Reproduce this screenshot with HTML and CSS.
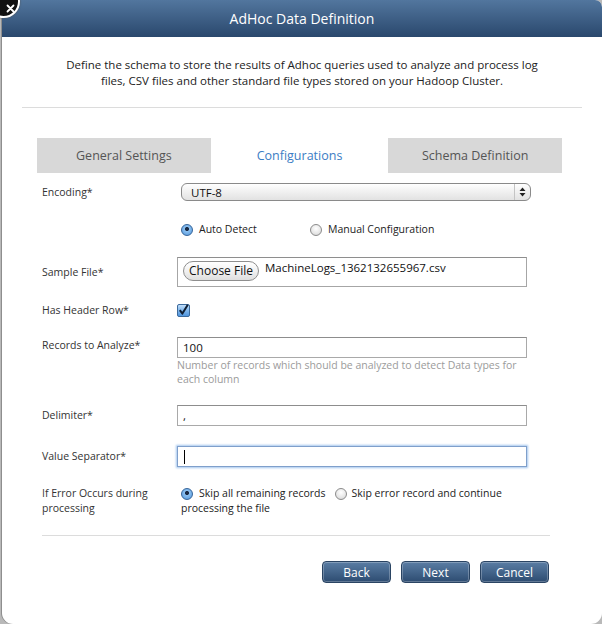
FILE: index.html
```html
<!DOCTYPE html>
<html>
<head>
<meta charset="utf-8">
<title>AdHoc Data Definition</title>
<link rel="stylesheet" href="styles.css">
</head>
<body>
<div class="dialog">
  <div class="close">
    <svg width="12" height="12" viewBox="0 0 12 12"><path d="M2 2 L10 10 M10 2 L2 10" stroke="#fff" stroke-width="2.4" stroke-linecap="round"/></svg>
  </div>
  <div class="header">AdHoc Data Definition</div>
  <p class="intro">Define the schema to store the results of Adhoc queries used to analyze and process log<br>files, CSV files and other standard file types stored on your Hadoop Cluster.</p>
  <hr class="sep">
  <div class="tabs">
    <div class="tab">General Settings</div>
    <div class="tab active">Configurations</div>
    <div class="tab">Schema Definition</div>
  </div>
  <div class="form">
    <div class="row r-enc">
      <div class="label">Encoding*</div>
      <div class="select">
        <span class="select-text">UTF-8</span>
        <span class="select-arrows">
          <svg width="7" height="10" viewBox="0 0 7 10"><path d="M3.5 0.5 L6.5 4 L0.5 4 Z M3.5 9.5 L6.5 6 L0.5 6 Z" fill="#222"/></svg>
        </span>
      </div>
    </div>
    <div class="row r-detect">
      <div class="label"></div>
      <div class="options">
        <span class="opt opt-auto"><span class="radio on"></span><span>Auto Detect</span></span>
        <span class="opt"><span class="radio"></span><span>Manual Configuration</span></span>
      </div>
    </div>
    <div class="row r-file">
      <div class="label">Sample File*</div>
      <div class="filebox">
        <span class="choose">Choose File</span>
        <span class="filename">MachineLogs_1362132655967.csv</span>
      </div>
    </div>
    <div class="row r-header">
      <div class="label">Has Header Row*</div>
      <div class="check">
        <svg width="13" height="13" viewBox="0 0 13 13">
          <defs><linearGradient id="cg" x1="0" y1="0" x2="0" y2="1"><stop offset="0" stop-color="#c9e3fb"/><stop offset="0.5" stop-color="#7fb6ec"/><stop offset="1" stop-color="#4b92dc"/></linearGradient></defs>
          <rect x="0.5" y="0.5" width="12" height="12" rx="1.5" fill="url(#cg)" stroke="#3c6a9c"/>
          <path d="M2.8 6.2 L5.4 9.6 L10.8 0.8" fill="none" stroke="#0f1e33" stroke-width="2" stroke-linejoin="round"/>
        </svg>
      </div>
    </div>
    <div class="row r-records top">
      <div class="label lbl-top">Records to Analyze*</div>
      <div>
        <div class="input">100</div>
        <div class="help">Number of records which should be analyzed to detect Data types for each column</div>
      </div>
    </div>
    <div class="row r-delim">
      <div class="label">Delimiter*</div>
      <div class="input">,</div>
    </div>
    <div class="row r-sep">
      <div class="label">Value Separator*</div>
      <div class="input focus"><span class="caret"></span></div>
    </div>
    <div class="row r-error top">
      <div class="label">If Error Occurs during processing</div>
      <div class="flow">
        <div class="flow-line"><span class="radio on"></span><span>Skip all remaining records</span><span class="radio second"></span><span>Skip error record and continue</span></div>
        <div class="flow-cont">processing the file</div>
      </div>
    </div>
  </div>
  <hr class="sep2">
  <div class="actions">
    <button class="btn">Back</button>
    <button class="btn">Next</button>
    <button class="btn">Cancel</button>
  </div>
</div>
</body>
</html>
```

FILE: styles.css
```css
html, body {
  margin: 0;
  padding: 0;
  height: 100%;
}
body {
  background: #b9b9b9;
  font-family: "Open Sans", "DejaVu Sans", sans-serif;
  overflow: hidden;
}
.dialog {
  position: relative;
  margin-left: 2px;
  width: 600px;
  height: 624px;
  background: #fff;
  border-radius: 7px 7px 11px 11px;
  box-shadow: -1px 0 0 #8e8e8e;
}
.close {
  position: absolute;
  left: -15px;
  top: -15px;
  width: 26px;
  height: 26px;
  border-radius: 50%;
  background: #111;
  border: 2px solid #fff;
  box-shadow: 0 0 2px #555;
  display: flex;
  align-items: flex-end;
  justify-content: flex-end;
  padding: 0 3px 3px 0;
  box-sizing: content-box;
  z-index: 2;
}
.close svg {
  width: 9px;
  height: 9px;
}
.header {
  height: 37px;
  background: linear-gradient(#52769e, #2a486d);
  border-radius: 7px 7px 0 0;
  color: #fff;
  font-size: 14px;
  display: flex;
  align-items: center;
  justify-content: center;
}
.intro {
  margin: 20px 0 0;
  text-align: center;
  font-size: 11.5px;
  line-height: 16px;
  color: #222;
}
.sep {
  margin: 18px 20px 0;
  border: 0;
  border-top: 1px solid #dcdcdc;
  height: 0;
}
.tabs {
  display: flex;
  gap: 2px;
  margin: 30px 0 0 35px;
  width: 525px;
}
.tab {
  flex: 1;
  height: 35px;
  background: #d8d8d8;
  color: #555;
  font-size: 12.5px;
  display: flex;
  align-items: center;
  justify-content: center;
}
.tab.active {
  background: #fff;
  color: #3b7dc4;
}
.form {
  padding-left: 40px;
}
.row {
  display: grid;
  grid-template-columns: 135px 350px;
  align-items: center;
  font-size: 10.5px;
  line-height: 15px;
  color: #333;
}
.row.top {
  align-items: start;
}
.label {
  color: #333;
}
.lbl-top {
  padding-top: 1px;
}
.r-enc { margin-top: 10px; }
.r-detect { margin-top: 21px; }
.r-file { margin-top: 20px; }
.r-header { margin-top: 16px; }
.r-records { margin-top: 19px; }
.r-delim { margin-top: 19px; }
.r-sep { margin-top: 20px; }
.r-error { margin-top: 19px; }

.select {
  margin-left: 4px;
  width: 350px;
  height: 18px;
  box-sizing: border-box;
  border: 1px solid #8a8a8a;
  border-radius: 6px;
  background: linear-gradient(#ffffff, #f0f0f0 50%, #e2e2e2);
  display: flex;
  align-items: center;
  font-size: 11.5px;
  color: #111;
}
.select-text {
  flex: 1;
  padding-left: 9px;
}
.select-arrows {
  width: 15px;
  height: 100%;
  border-left: 1px solid #c4c4c4;
  display: flex;
  align-items: center;
  justify-content: center;
}
.options {
  display: flex;
  align-items: center;
  padding-left: 4px;
  color: #222;
}
.opt {
  display: flex;
  align-items: center;
}
.opt-auto {
  width: 129px;
}
.radio {
  display: inline-block;
  box-sizing: border-box;
  width: 12px;
  height: 12px;
  border-radius: 50%;
  border: 1px solid #8b8b8b;
  background: radial-gradient(circle at 50% 35%, #ffffff, #e6e6e6 60%, #cfcfcf);
  margin-right: 6px;
  flex: none;
}
.radio.on {
  border-color: #36659a;
  background: radial-gradient(circle at 50% 40%, #1a2a44 0 1.6px, #8cc0f0 2.4px, #4f95dc 100%);
}
.filebox {
  box-sizing: border-box;
  height: 30px;
  border: 1px solid #a6a6a6;
  border-top-color: #8e8e8e;
  display: flex;
  align-items: flex-start;
  padding: 3px 0 0 5px;
}
.choose {
  box-sizing: border-box;
  width: 76px;
  height: 20px;
  border: 1px solid #8e8e8e;
  border-radius: 10px;
  background: linear-gradient(#ffffff, #f1f1f1 50%, #dedede);
  font-size: 12px;
  line-height: 18px;
  text-align: center;
  color: #111;
}
.filename {
  margin-left: 6px;
  font-size: 11.5px;
  line-height: 13px;
  color: #111;
}
.check {
  height: 13px;
}
.check svg {
  display: block;
}
.input {
  box-sizing: border-box;
  width: 350px;
  height: 21px;
  border: 1px solid #a9a9a9;
  border-top-color: #8d8d8d;
  padding: 0 5px;
  display: flex;
  align-items: center;
  font-size: 11.5px;
  color: #111;
}
.input.focus {
  border-color: #7f9fcb;
  box-shadow: 0 0 2px 1px #a4c6ee;
}
.caret {
  width: 1px;
  height: 14px;
  background: #000;
  margin-left: 1px;
}
.help {
  color: #9b9b9b;
  font-size: 10.5px;
  line-height: 14px;
  padding-right: 6px;
}
.flow {
  padding-left: 4px;
  color: #222;
}
.flow-line {
  display: flex;
  align-items: center;
}
.flow .radio.second {
  margin-left: 9px;
  margin-right: 5px;
}
.sep2 {
  margin: 19px 52px 0 40px;
  border: 0;
  border-top: 1px solid #dcdcdc;
  height: 0;
}
.actions {
  display: flex;
  justify-content: flex-end;
  gap: 10px;
  margin: 25px 53px 0 0;
}
.btn {
  width: 69px;
  height: 22px;
  border: 1px solid #2a4463;
  border-radius: 4px;
  background: linear-gradient(#5a7da4, #2d4c71);
  color: #fff;
  font-family: "Open Sans", "DejaVu Sans", sans-serif;
  font-size: 12px;
  padding: 0;
  box-shadow: 0 0 0 1px rgba(255,255,255,0.25) inset;
}
```
